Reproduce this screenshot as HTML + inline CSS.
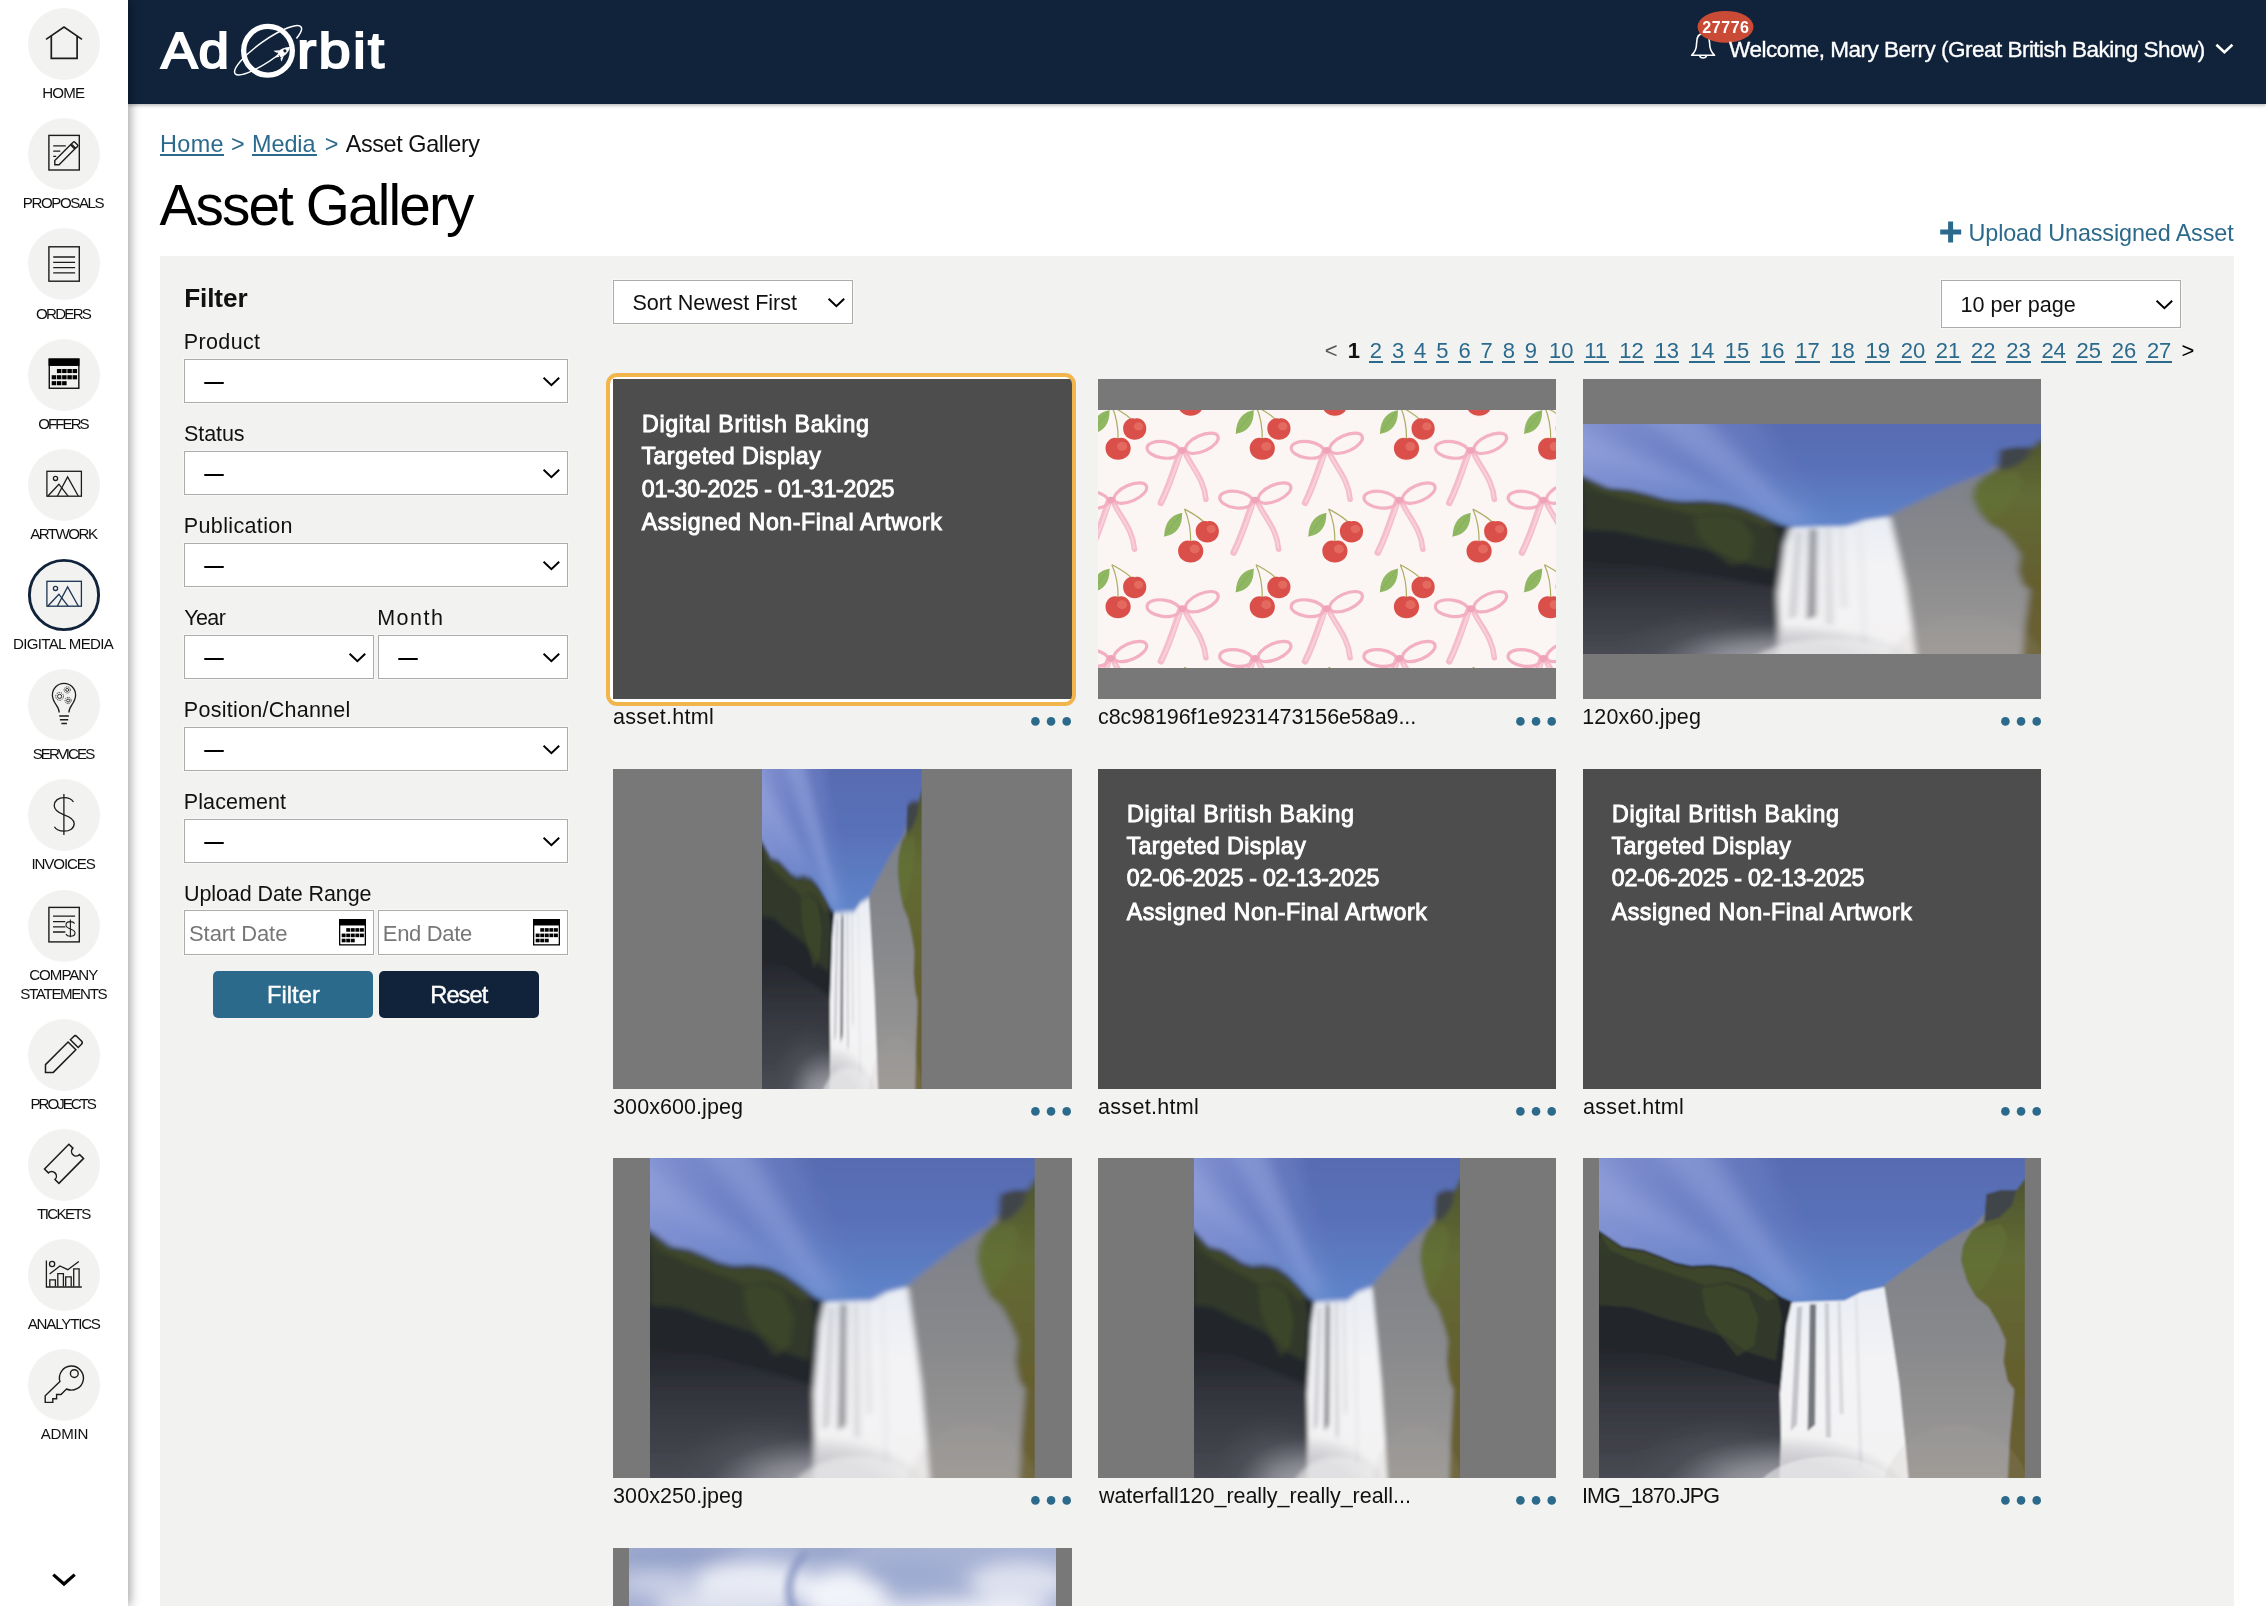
<!DOCTYPE html>
<html lang="en"><head><meta charset="utf-8"><title>Asset Gallery</title><style>
html,body{margin:0;padding:0;}
body{width:2266px;height:1606px;overflow:hidden;background:#fff;font-family:"Liberation Sans", sans-serif;position:relative;}
#root{position:absolute;left:0;top:0;width:2266px;height:1606px;overflow:hidden;will-change:transform;}
#root div,#root span.t,#root svg{position:absolute;}
span.t{white-space:pre;display:block;}
</style></head><body><div id="root">
<div style="left:160px;top:256px;width:2074px;height:1350px;background:#f2f2f1;"></div>
<div style="left:128px;top:0;width:2138px;height:104px;background:#10233b;box-shadow:0 1px 4px rgba(0,0,0,.35);"></div>
<div style="left:0;top:0;width:128px;height:1606px;background:#fff;box-shadow:2px 0 10px rgba(0,0,0,.38);"></div>
<svg width="128" height="1606" viewBox="0 0 128 1606" style="left:0;top:0"><circle cx="64" cy="44" r="36" fill="#f2f2f1"/><circle cx="64" cy="154" r="36" fill="#f2f2f1"/><circle cx="64" cy="264" r="36" fill="#f2f2f1"/><circle cx="64" cy="375" r="36" fill="#f2f2f1"/><circle cx="64" cy="485" r="36" fill="#f2f2f1"/><circle cx="64" cy="595" r="34.6" fill="#f2f2f1" stroke="#10233b" stroke-width="2.9"/><circle cx="64" cy="705" r="36" fill="#f2f2f1"/><circle cx="64" cy="815" r="36" fill="#f2f2f1"/><circle cx="64" cy="926" r="36" fill="#f2f2f1"/><circle cx="64" cy="1055" r="36" fill="#f2f2f1"/><circle cx="64" cy="1165" r="36" fill="#f2f2f1"/><circle cx="64" cy="1275" r="36" fill="#f2f2f1"/><circle cx="64" cy="1385" r="36" fill="#f2f2f1"/><g fill="none" stroke="#1c1c1c" stroke-width="1.7" stroke-linejoin="miter" stroke-linecap="butt"><path d="M46,39.4 L64,27 L82,39.4"/><path d="M51.3,36 V58.4 H77.1 V36"/></g><g fill="none" stroke="#1c1c1c" stroke-width="1.4" stroke-linejoin="miter" stroke-linecap="butt"><rect x="48.9" y="135.4" width="30.4" height="34.6"/><path d="M53.2,145.9 H65.8 M53.2,151.1 H60.3 M53.2,156.3 H56.2" stroke-width="1.2"/><g fill="#f2f2f1"><g transform="translate(54.8,164.8) rotate(-45)"><path d="M0,0 L3.0,-3.0 L25.2,-3.0 L25.2,3.0 L3.0,3.0 Z"/><path d="M26.4,-3.0 L29.0,-3.0 Q30.2,-3.0 30.2,-1.8 L30.2,1.8 Q30.2,3.0 29.0,3.0 L26.4,3.0 Z"/></g></g></g><g fill="none" stroke="#1c1c1c" stroke-width="1.4" stroke-linejoin="miter" stroke-linecap="butt"><rect x="48.9" y="246.8" width="30.4" height="34.4"/><path d="M53.2,257 H75.1 M53.2,262.3 H75.1 M53.2,267.6 H75.1 M53.2,272.8 H75.1" stroke-width="1.3"/></g><g><rect x="49.25" y="359.15" width="29.599999999999998" height="29.099999999999998" fill="none" stroke="#000" stroke-width="1.3"/><rect x="48.6" y="358.5" width="30.9" height="7.45" fill="#000"/><rect x="56.91" y="368.99" width="4.48" height="4.10" fill="#000"/><rect x="62.13" y="368.99" width="4.48" height="4.10" fill="#000"/><rect x="67.36" y="368.99" width="4.48" height="4.10" fill="#000"/><rect x="72.58" y="368.99" width="4.48" height="4.10" fill="#000"/><rect x="51.69" y="375.22" width="4.48" height="4.10" fill="#000"/><rect x="56.91" y="375.22" width="4.48" height="4.10" fill="#000"/><rect x="62.13" y="375.22" width="4.48" height="4.10" fill="#000"/><rect x="67.36" y="375.22" width="4.48" height="4.10" fill="#000"/><rect x="72.58" y="375.22" width="4.48" height="4.10" fill="#000"/><rect x="51.69" y="381.15" width="4.48" height="4.10" fill="#000"/><rect x="56.91" y="381.15" width="4.48" height="4.10" fill="#000"/><rect x="62.13" y="381.15" width="4.48" height="4.10" fill="#000"/></g><g fill="none" stroke="#1c1c1c" stroke-width="1.3" stroke-linejoin="miter" stroke-linecap="butt"><rect x="46.9" y="471.3" width="34.5" height="24.90"/><circle cx="55.5" cy="478.40" r="2.1"/><path d="M47.7,496.2 L58.9,484.20 L68.1,496.2"/><path d="M57.3,496.2 L67.6,476.90 L78.4,496.2"/></g><g fill="none" stroke="#1d3352" stroke-width="1.3" stroke-linejoin="miter" stroke-linecap="butt"><rect x="46.9" y="581.3000000000001" width="34.5" height="24.90"/><circle cx="55.5" cy="588.40" r="2.1"/><path d="M47.7,606.1999999999999 L58.9,594.20 L68.1,606.1999999999999"/><path d="M57.3,606.1999999999999 L67.6,586.90 L78.4,606.1999999999999"/></g><g fill="none" stroke="#1c1c1c" stroke-width="1.3" stroke-linejoin="miter" stroke-linecap="butt"><path d="M59.2,712.6 C59.2,705.5 52.4,703.5 52.4,695 A11.6,11.6 0 1 1 75.6,695 C75.6,703.5 68.9,705.5 68.9,712.6"/><path d="M59.2,716 H68.9 M59.9,719.8 H68.2 M61.4,723.5 H66.9" stroke-width="1.5"/><g stroke-width="0.9"><circle cx="59.6" cy="696.4" r="2.1"/><circle cx="59.6" cy="696.4" r="3.9" stroke-dasharray="1.3 1.1"/><circle cx="67.2" cy="689.9" r="1.5"/><circle cx="67.2" cy="689.9" r="3.1" stroke-dasharray="1.2 1"/><circle cx="68.1" cy="700.5" r="1.5"/><circle cx="68.1" cy="700.5" r="3.1" stroke-dasharray="1.2 1"/></g></g><g fill="none" stroke="#1c1c1c" stroke-width="1.3" stroke-linejoin="miter" stroke-linecap="butt"><path d="M63.9,793.9 V835"/><path d="M73.4,802 C71.8,799 68.3,797.6 64,797.6 C58.2,797.6 54.2,801 54.2,805.6 C54.2,810.6 58.5,812.9 64,814.8 C70,816.8 74.2,819 74.2,823.6 C74.2,828.4 69.8,831.2 64,831.2 C59.5,831.2 56,829.6 54.4,826.8"/></g><g fill="none" stroke="#1c1c1c" stroke-width="1.4" stroke-linejoin="miter" stroke-linecap="butt"><rect x="48.9" y="907.4" width="30.4" height="34.5"/><path d="M53,916.1 H75.1 M53,921.6 H65.3 M53,926.8 H65.3 M53,932 H65.3" stroke-width="1.3"/><path d="M70.4,919.4 V937.3" stroke-width="1.1"/><path d="M74.6,923.6 C73.8,922.2 72.3,921.6 70.4,921.6 C67.8,921.6 66,923 66,925 C66,927.2 68,928.2 70.4,928.9 C73.2,929.8 75,930.8 75,932.9 C75,935 73,936.2 70.4,936.2 C68.2,936.2 66.6,935.4 65.9,934" stroke-width="1.1"/></g><g fill="none" stroke="#1c1c1c" stroke-width="1.5" stroke-linejoin="miter" stroke-linecap="butt"><g transform="translate(45.5,1072.4) rotate(-45)"><path d="M0,0 L5.5,-5.5 L37.4,-5.5 L37.4,5.5 L5.5,5.5 Z"/><path d="M40.7,-5.5 L45.4,-5.5 Q47.6,-5.5 47.6,-3.3 L47.6,3.3 Q47.6,5.5 45.4,5.5 L40.7,5.5 Z"/></g></g><g fill="none" stroke="#1c1c1c" stroke-width="1.5" stroke-linejoin="miter" stroke-linecap="butt"><path d="M68.9,1144.3 L72.87,1148.11 A4.68,4.68 0 0 0 79.63,1154.59 L83.6,1158.4 L58.9,1183.4 L55.01,1179.51 A4.68,4.68 0 0 0 48.39,1172.89 L44.5,1169 Z"/></g><g fill="none" stroke="#1c1c1c" stroke-width="1.3" stroke-linejoin="miter" stroke-linecap="butt"><path d="M46.4,1260.4 V1287 H81.8"/><path d="M49.8,1286.6 V1279.8 H55.4 V1286.6 M57.8,1286.6 V1273.7 H63.4 V1286.6 M65.7,1286.6 V1276.8 H71.2 V1286.6 M73.7,1286.6 V1268.8 H79.1 V1286.6"/><path d="M49.6,1274.1 L59.9,1265.9 L67.8,1269.7 L78.8,1261.5"/><circle cx="52.1" cy="1264" r="2.6"/></g><g fill="none" stroke="#1c1c1c" stroke-width="1.4" stroke-linejoin="miter" stroke-linecap="butt"><path d="M59.9,1381.4 L45.2,1395.8 V1402.4 H52.8 V1398.8 H56.6 V1394.5 H61 L66.5,1389 A12,12 0 1 0 59.9,1381.4 Z"/><circle cx="74.3" cy="1373.6" r="3.9"/></g><path d="M53.3,1574.6 L64,1584 L74.7,1574.6" fill="none" stroke="#000" stroke-width="3.2"/></svg>
<span class="t" style="left:42.21px;top:84.00px;font-size:15.1px;line-height:17px;color:#111;letter-spacing:-0.765px;">HOME</span>
<span class="t" style="left:22.86px;top:194.00px;font-size:15.1px;line-height:17px;color:#111;letter-spacing:-1.424px;">PROPOSALS</span>
<span class="t" style="left:36.08px;top:305.00px;font-size:15.1px;line-height:17px;color:#111;letter-spacing:-1.754px;">ORDERS</span>
<span class="t" style="left:38.28px;top:415.00px;font-size:15.1px;line-height:17px;color:#111;letter-spacing:-1.962px;">OFFERS</span>
<span class="t" style="left:30.17px;top:525.00px;font-size:15.1px;line-height:17px;color:#111;letter-spacing:-1.513px;">ARTWORK</span>
<span class="t" style="left:12.96px;top:635.00px;font-size:15.1px;line-height:17px;color:#111;letter-spacing:-0.68px;">DIGITAL MEDIA</span>
<span class="t" style="left:32.66px;top:745.00px;font-size:15.1px;line-height:17px;color:#111;letter-spacing:-1.912px;">SERVICES</span>
<span class="t" style="left:31.51px;top:855.00px;font-size:15.1px;line-height:17px;color:#111;letter-spacing:-1.122px;">INVOICES</span>
<span class="t" style="left:29.23px;top:966.00px;font-size:15.1px;line-height:17px;color:#111;letter-spacing:-1.017px;">COMPANY</span>
<span class="t" style="left:20.36px;top:985.00px;font-size:15.1px;line-height:17px;color:#111;letter-spacing:-1.328px;">STATEMENTS</span>
<span class="t" style="left:30.56px;top:1095.00px;font-size:15.1px;line-height:17px;color:#111;letter-spacing:-2.026px;">PROJECTS</span>
<span class="t" style="left:37.11px;top:1205.00px;font-size:15.1px;line-height:17px;color:#111;letter-spacing:-1.603px;">TICKETS</span>
<span class="t" style="left:27.72px;top:1315.00px;font-size:15.1px;line-height:17px;color:#111;letter-spacing:-1.193px;">ANALYTICS</span>
<span class="t" style="left:40.82px;top:1425.00px;font-size:15.1px;line-height:17px;color:#111;letter-spacing:-0.27px;">ADMIN</span>
<svg width="2138" height="104" viewBox="128 0 2138 104" style="left:128px;top:0"><circle cx="268" cy="50.75" r="24.35" fill="none" stroke="#fff" stroke-width="5.3"/><g transform="translate(268.1,50.3) rotate(-35.3)" fill="none" stroke="#fff" stroke-width="1.5"><path d="M13,9.2 A40.4,10 0 0 1 -40.4,0 A40.4,10 0 0 1 40.4,0 A40.4,10 0 0 1 30,6.7"/></g><g transform="translate(282.2,52.8) rotate(54) scale(1.28)" fill="#fff"><path d="M0,-7.5 C2.6,-4.5 3,-1 2.6,3 L-2.6,3 C-3,-1 -2.6,-4.5 0,-7.5 Z"/><path d="M-2.8,0.5 L-5.4,4.6 L-2.6,3.6 Z M2.8,0.5 L5.4,4.6 L2.6,3.6 Z M-1.3,3.6 L0,6.2 L1.3,3.6 Z"/><circle cx="0" cy="-2.6" r="1.25" fill="#10233b"/></g><g fill="none" stroke="#fff" stroke-width="1.6" stroke-linejoin="round"><path d="M1691.6,55.3 C1696,51.5 1696.6,47.5 1696.6,43 C1696.6,37 1699,33.6 1703.1,33.6 C1707.2,33.6 1709.6,37 1709.6,43 C1709.6,47.5 1710.2,51.5 1714.6,55.3 Z"/><path d="M1699.6,55.6 A3.6,3.1 0 0 0 1706.6,55.6"/></g><ellipse cx="1725.5" cy="26.8" rx="28" ry="15.9" fill="#c94b35"/><path d="M2216.4,44.8 L2224.4,52.2 L2232.4,44.8" fill="none" stroke="#fff" stroke-width="2.6"/></svg>
<span class="t" style="left:160.89px;top:22.00px;font-size:50.8px;line-height:57px;color:#fff;letter-spacing:0.862px;transform:scaleX(1.08);transform-origin:0 0;-webkit-text-stroke:1.9px #fff;">Ad</span>
<span class="t" style="left:296.55px;top:22.00px;font-size:50.8px;line-height:57px;color:#fff;letter-spacing:1.933px;transform:scaleX(1.14);transform-origin:0 0;-webkit-text-stroke:1.9px #fff;">rbit</span>
<span class="t" style="left:1702.35px;top:19.00px;font-size:16px;line-height:17px;color:#fff;letter-spacing:0.533px;font-weight:700;">27776</span>
<span class="t" style="left:1729.10px;top:37.00px;font-size:22.5px;line-height:25px;color:#fff;letter-spacing:-0.512px;-webkit-text-stroke:0.35px #fff;">Welcome, Mary Berry (Great British Baking Show)</span>
<span class="t" style="left:160.08px;top:131.00px;font-size:23.4px;line-height:26px;color:#2b6a8c;letter-spacing:0.384px;">Home</span><div style="left:160.10px;top:154.1px;width:63.50px;height:1.9px;background:#2b6a8c"></div>
<span class="t" style="left:231.05px;top:131.00px;font-size:23.4px;line-height:26px;color:#2b6a8c;letter-spacing:-0.375px;">&gt;</span>
<span class="t" style="left:252.08px;top:131.00px;font-size:23.4px;line-height:26px;color:#2b6a8c;letter-spacing:-0.075px;">Media</span><div style="left:252.30px;top:154.1px;width:64.60px;height:1.9px;background:#2b6a8c"></div>
<span class="t" style="left:324.65px;top:131.00px;font-size:23.4px;line-height:26px;color:#2b6a8c;letter-spacing:-0.175px;">&gt;</span>
<span class="t" style="left:345.75px;top:131.00px;font-size:23.4px;line-height:26px;color:#111;letter-spacing:-0.4px;">Asset Gallery</span>
<span class="t" style="left:159.49px;top:174.00px;font-size:56.7px;line-height:63px;color:#000;letter-spacing:-1.856px;">Asset Gallery</span>
<svg width="22" height="22" viewBox="0 0 22 22" style="left:1940px;top:221px"><path d="M10.6,0.4 V21.4 M0.2,10.9 H21.2" stroke="#2b6a8c" stroke-width="5" fill="none"/></svg>
<span class="t" style="left:1968.49px;top:220.00px;font-size:23.4px;line-height:26px;color:#2b6a8c;letter-spacing:-0.123px;">Upload Unassigned Asset</span>
<span class="t" style="left:184.15px;top:283.00px;font-size:26.2px;line-height:30px;color:#111;letter-spacing:-0.116px;font-weight:700;">Filter</span>
<span class="t" style="left:183.84px;top:330.00px;font-size:21.5px;line-height:24px;color:#111;letter-spacing:0.352px;">Product</span>
<div style="left:184px;top:359px;width:382px;height:42px;background:#fff;border:1px solid #acacac;box-shadow:0 0 0 1px rgba(255,255,255,.45);"></div>
<div style="left:204.2px;top:382.3px;width:19.6px;height:1.8px;background:#000;border-radius:1px"></div>
<svg width="20.8" height="13.2" viewBox="-2 -2 20.8 13.2" style="left:541.4px;top:374.6px"><path d="M0.6,0.7 L8.40,8.20 L16.20,0.7" fill="none" stroke="#000" stroke-width="2"/></svg>
<span class="t" style="left:184.02px;top:422.00px;font-size:21.5px;line-height:24px;color:#111;letter-spacing:-0.08px;">Status</span>
<div style="left:184px;top:451px;width:382px;height:42px;background:#fff;border:1px solid #acacac;box-shadow:0 0 0 1px rgba(255,255,255,.45);"></div>
<div style="left:204.2px;top:474.3px;width:19.6px;height:1.8px;background:#000;border-radius:1px"></div>
<svg width="20.8" height="13.2" viewBox="-2 -2 20.8 13.2" style="left:541.4px;top:466.6px"><path d="M0.6,0.7 L8.40,8.20 L16.20,0.7" fill="none" stroke="#000" stroke-width="2"/></svg>
<span class="t" style="left:183.84px;top:514.00px;font-size:21.5px;line-height:24px;color:#111;letter-spacing:0.357px;">Publication</span>
<div style="left:184px;top:543px;width:382px;height:42px;background:#fff;border:1px solid #acacac;box-shadow:0 0 0 1px rgba(255,255,255,.45);"></div>
<div style="left:204.2px;top:566.3px;width:19.6px;height:1.8px;background:#000;border-radius:1px"></div>
<svg width="20.8" height="13.2" viewBox="-2 -2 20.8 13.2" style="left:541.4px;top:558.6px"><path d="M0.6,0.7 L8.40,8.20 L16.20,0.7" fill="none" stroke="#000" stroke-width="2"/></svg>
<span class="t" style="left:183.84px;top:698.00px;font-size:21.5px;line-height:24px;color:#111;letter-spacing:0.263px;">Position/Channel</span>
<div style="left:184px;top:727px;width:382px;height:42px;background:#fff;border:1px solid #acacac;box-shadow:0 0 0 1px rgba(255,255,255,.45);"></div>
<div style="left:204.2px;top:750.3px;width:19.6px;height:1.8px;background:#000;border-radius:1px"></div>
<svg width="20.8" height="13.2" viewBox="-2 -2 20.8 13.2" style="left:541.4px;top:742.6px"><path d="M0.6,0.7 L8.40,8.20 L16.20,0.7" fill="none" stroke="#000" stroke-width="2"/></svg>
<span class="t" style="left:183.84px;top:790.00px;font-size:21.5px;line-height:24px;color:#111;letter-spacing:0.078px;">Placement</span>
<div style="left:184px;top:819px;width:382px;height:42px;background:#fff;border:1px solid #acacac;box-shadow:0 0 0 1px rgba(255,255,255,.45);"></div>
<div style="left:204.2px;top:842.3px;width:19.6px;height:1.8px;background:#000;border-radius:1px"></div>
<svg width="20.8" height="13.2" viewBox="-2 -2 20.8 13.2" style="left:541.4px;top:834.6px"><path d="M0.6,0.7 L8.40,8.20 L16.20,0.7" fill="none" stroke="#000" stroke-width="2"/></svg>
<span class="t" style="left:184.13px;top:606.00px;font-size:21.5px;line-height:24px;color:#111;letter-spacing:-0.541px;">Year</span>
<span class="t" style="left:377.24px;top:606.00px;font-size:21.5px;line-height:24px;color:#111;letter-spacing:1.474px;">Month</span>
<div style="left:184px;top:635px;width:188px;height:42px;background:#fff;border:1px solid #acacac;box-shadow:0 0 0 1px rgba(255,255,255,.45);"></div>
<div style="left:204.2px;top:658.3px;width:19.6px;height:1.8px;background:#000;border-radius:1px"></div>
<svg width="20.8" height="13.2" viewBox="-2 -2 20.8 13.2" style="left:347.4px;top:650.6px"><path d="M0.6,0.7 L8.40,8.20 L16.20,0.7" fill="none" stroke="#000" stroke-width="2"/></svg>
<div style="left:378px;top:635px;width:188px;height:42px;background:#fff;border:1px solid #acacac;box-shadow:0 0 0 1px rgba(255,255,255,.45);"></div>
<div style="left:398.2px;top:658.3px;width:19.6px;height:1.8px;background:#000;border-radius:1px"></div>
<svg width="20.8" height="13.2" viewBox="-2 -2 20.8 13.2" style="left:541.4px;top:650.6px"><path d="M0.6,0.7 L8.40,8.20 L16.20,0.7" fill="none" stroke="#000" stroke-width="2"/></svg>
<span class="t" style="left:183.94px;top:882.00px;font-size:21.5px;line-height:24px;color:#111;letter-spacing:-0.078px;">Upload Date Range</span>
<div style="left:184px;top:910px;width:188px;height:42.7px;background:#fff;border:1px solid #acacac;box-shadow:0 0 0 1px rgba(255,255,255,.45);"></div>
<span class="t" style="left:189.00px;top:921.00px;font-size:22px;line-height:25px;color:#777;letter-spacing:-0.074px;">Start Date</span>
<svg width="27" height="27" viewBox="0 0 27 27" style="left:339px;top:919.3px"><g><rect x="0.65" y="0.65" width="25.7" height="25.2" fill="none" stroke="#000" stroke-width="1.3"/><rect x="0" y="0" width="27" height="6.49" fill="#000"/><rect x="7.26" y="9.14" width="3.91" height="3.58" fill="#000"/><rect x="11.83" y="9.14" width="3.91" height="3.58" fill="#000"/><rect x="16.39" y="9.14" width="3.91" height="3.58" fill="#000"/><rect x="20.95" y="9.14" width="3.91" height="3.58" fill="#000"/><rect x="2.70" y="14.58" width="3.91" height="3.58" fill="#000"/><rect x="7.26" y="14.58" width="3.91" height="3.58" fill="#000"/><rect x="11.83" y="14.58" width="3.91" height="3.58" fill="#000"/><rect x="16.39" y="14.58" width="3.91" height="3.58" fill="#000"/><rect x="20.95" y="14.58" width="3.91" height="3.58" fill="#000"/><rect x="2.70" y="19.74" width="3.91" height="3.58" fill="#000"/><rect x="7.26" y="19.74" width="3.91" height="3.58" fill="#000"/><rect x="11.83" y="19.74" width="3.91" height="3.58" fill="#000"/></g></svg>
<div style="left:378px;top:910px;width:188px;height:42.7px;background:#fff;border:1px solid #acacac;box-shadow:0 0 0 1px rgba(255,255,255,.45);"></div>
<span class="t" style="left:382.80px;top:921.00px;font-size:22px;line-height:25px;color:#777;letter-spacing:-0.336px;">End Date</span>
<svg width="27" height="27" viewBox="0 0 27 27" style="left:533px;top:919.3px"><g><rect x="0.65" y="0.65" width="25.7" height="25.2" fill="none" stroke="#000" stroke-width="1.3"/><rect x="0" y="0" width="27" height="6.49" fill="#000"/><rect x="7.26" y="9.14" width="3.91" height="3.58" fill="#000"/><rect x="11.83" y="9.14" width="3.91" height="3.58" fill="#000"/><rect x="16.39" y="9.14" width="3.91" height="3.58" fill="#000"/><rect x="20.95" y="9.14" width="3.91" height="3.58" fill="#000"/><rect x="2.70" y="14.58" width="3.91" height="3.58" fill="#000"/><rect x="7.26" y="14.58" width="3.91" height="3.58" fill="#000"/><rect x="11.83" y="14.58" width="3.91" height="3.58" fill="#000"/><rect x="16.39" y="14.58" width="3.91" height="3.58" fill="#000"/><rect x="20.95" y="14.58" width="3.91" height="3.58" fill="#000"/><rect x="2.70" y="19.74" width="3.91" height="3.58" fill="#000"/><rect x="7.26" y="19.74" width="3.91" height="3.58" fill="#000"/><rect x="11.83" y="19.74" width="3.91" height="3.58" fill="#000"/></g></svg>
<div style="left:213px;top:971px;width:160px;height:47px;background:#2c6a8b;border-radius:5px;"></div>
<div style="left:379px;top:971px;width:160px;height:47px;background:#10233b;border-radius:5px;"></div>
<span class="t" style="left:266.96px;top:982.00px;font-size:23.6px;line-height:26px;color:#fff;letter-spacing:0.078px;-webkit-text-stroke:0.4px #fff;">Filter</span>
<span class="t" style="left:430.26px;top:982.00px;font-size:23.6px;line-height:26px;color:#fff;letter-spacing:-0.908px;-webkit-text-stroke:0.4px #fff;">Reset</span>
<svg width="0" height="0" style="left:0;top:0"><defs>
<linearGradient id="gsky" x1="0" y1="0" x2="0" y2="1">
 <stop offset="0" stop-color="#5868ad"/><stop offset=".25" stop-color="#5970b8"/><stop offset=".47" stop-color="#5f86cb"/><stop offset="1" stop-color="#5f86cb"/>
</linearGradient>
<linearGradient id="gskyl" x1="0" y1="0" x2="1" y2="0">
 <stop offset="0" stop-color="#93a0dc" stop-opacity=".9"/><stop offset=".2" stop-color="#8696d6" stop-opacity=".6"/><stop offset=".45" stop-color="#7c8fd0" stop-opacity="0"/>
</linearGradient>
<linearGradient id="gcliff" x1="0" y1="0" x2="0" y2="1">
 <stop offset="0" stop-color="#343a2c"/><stop offset=".2" stop-color="#24282a"/><stop offset=".55" stop-color="#24262b"/><stop offset="1" stop-color="#2f3037"/>
</linearGradient>
<linearGradient id="gmist" x1="0" y1="0" x2="0" y2="1">
 <stop offset="0" stop-color="#7b7e88"/><stop offset=".45" stop-color="#88898c"/><stop offset="1" stop-color="#a29e9a"/>
</linearGradient>
<linearGradient id="ggreen" x1="0" y1="0" x2="0" y2="1">
 <stop offset="0" stop-color="#4b5130"/><stop offset=".25" stop-color="#626b34"/><stop offset=".6" stop-color="#655f2f"/><stop offset="1" stop-color="#6a6036"/>
</linearGradient>
<linearGradient id="gfall" x1="0" y1="0" x2="0" y2="1">
 <stop offset="0" stop-color="#e9edf4"/><stop offset=".3" stop-color="#f3f3f5"/><stop offset="1" stop-color="#f4f2f2"/>
</linearGradient>
<radialGradient id="gspray" cx=".5" cy=".5" r=".5">
 <stop offset="0" stop-color="#d5d5da" stop-opacity=".95"/><stop offset=".6" stop-color="#a9aab2" stop-opacity=".55"/><stop offset="1" stop-color="#80828c" stop-opacity="0"/>
</radialGradient>
<linearGradient id="ghaze" x1="0" y1="0" x2="0" y2="1">
 <stop offset="0" stop-color="#4a4c56" stop-opacity="0"/><stop offset=".35" stop-color="#4a4c56" stop-opacity=".45"/><stop offset="1" stop-color="#62646e" stop-opacity=".75"/>
</linearGradient>
<radialGradient id="gspray2" cx=".5" cy=".5" r=".5">
 <stop offset="0" stop-color="#74767f" stop-opacity=".7"/><stop offset="1" stop-color="#5a5c66" stop-opacity="0"/>
</radialGradient>
<filter id="fbA" x="-5%" y="-5%" width="110%" height="110%"><feGaussianBlur stdDeviation="3.2 2.6"/></filter>
<filter id="fbB" x="-5%" y="-5%" width="110%" height="110%"><feGaussianBlur stdDeviation="1.1"/></filter>
<filter id="fbS" x="-10%" y="-10%" width="120%" height="120%"><feGaussianBlur stdDeviation="9"/></filter>
<filter id="fbC" x="-20%" y="-20%" width="140%" height="140%"><feGaussianBlur stdDeviation="9"/></filter>
<filter id="fbE" x="-50%" y="-20%" width="200%" height="140%"><feGaussianBlur stdDeviation="3.5"/></filter>
<filter id="fbD" x="-20%" y="-20%" width="140%" height="140%"><feGaussianBlur stdDeviation="0.7"/></filter>

<g id="wfshapes">
 <rect x="-40" y="-40" width="480" height="380" fill="url(#gsky)"/>
 <rect x="-40" y="-40" width="480" height="220" fill="url(#gskyl)"/>
 <g filter="url(#fbS)">
  <path d="M25,-40 L85,-40 L200,134 L172,128 Z" fill="#a3b0e8" opacity=".42"/>
  <path d="M-40,-20 L-40,30 L150,112 L168,122 Z" fill="#a9b5ea" opacity=".3"/>
  <path d="M110,-40 L128,-40 L215,132 L206,134 Z" fill="#8fa0de" opacity=".18"/>
 </g>
 <path d="M262,124 L280,110 L300,96 L320,82 L340,70 L352,64 L364,50 L440,30 L440,340 L288,340 L284,240 L276,171 Z" fill="url(#gmist)"/>
 <path d="M400,20 L440,10 L440,340 L382,340 L386,261 L388,241 L390,217 L384,209 L380,191 L382,171 L376,157 L366,140 L354,130 L346,116 L340,96 L342,82 L350,68 L362,60 L364,34 L378,30 L392,30 Z" fill="url(#ggreen)"/>
 <path d="M364,34 L378,30 L392,30 L388,44 L376,56 L362,60 Z" fill="#3f444a"/>
 <path d="M378,62 L350,68 L342,82 L340,96 L346,116 L356,126 L368,112 L378,92 L384,74 Z" fill="#66763a" opacity=".45"/>
 <path d="M-40,48 L0,68 L22,83 L42,86 L58,92 L72,98 L87,101 L105,100 L125,103 L141,110 L157,120 L171,130 L182,135 L177,157 L174,191 L171,221 L172,261 L172,340 L-40,340 Z" fill="url(#gcliff)"/>
 <path d="M0,70 L22,85 L42,88 L58,94 L72,100 L87,103 L105,102 L125,105 L141,112 L157,122 L168,131 L158,134 L140,122 L120,116 L100,120 L84,114 L60,106 L36,98 L10,86 Z" fill="#4a522d" opacity=".7"/>
 <path d="M0,74 L40,92 L70,102 L105,104 L140,114 L168,132 L172,150 L166,190 L140,182 L120,168 L96,160 L60,150 L30,140 L0,138 Z" fill="#3d452a" opacity=".55"/>
 <path d="M96,122 L120,118 L140,126 L150,150 L146,176 L130,186 L114,166 L100,146 Z" fill="#4a552e" opacity=".45"/>
 <path d="M-40,175 L60,185 L120,200 L175,215 L172,340 L-40,340 Z" fill="url(#ghaze)"/>
 <ellipse cx="120" cy="290" rx="90" ry="50" fill="url(#gspray2)" opacity=".7"/>
 <path d="M181,135.5 L201,134.5 L231,133.5 L246.5,125.6 L268,121 L276,171 L282,211 L288,270 L294,340 L168,340 L171,261 L170,221 L173,191 L176,157 Z" fill="url(#gfall)"/>
 <path d="M198,137 L204,137 L203,250 L196,256 Z" fill="#565961" opacity=".8"/>
 <path d="M186,140 L191,139 L186,250 L180,256 Z" fill="#aeb0b8" opacity=".7"/>
 <path d="M212,136 L216,136 L218,262 L213,262 Z" fill="#b4b6bd" opacity=".6"/>
 <path d="M224,135 L227,135 L230,240 L226,240 Z" fill="#c8c9cf" opacity=".6"/>
 <path d="M240,130 L243,129 L248,290 L244,290 Z" fill="#dfe0e4" opacity=".7"/>
 <ellipse cx="175" cy="322" rx="120" ry="62" fill="url(#gspray)"/>
 <ellipse cx="215" cy="320" rx="70" ry="40" fill="#f2f2f3" opacity=".55"/>
 <ellipse cx="335" cy="320" rx="70" ry="70" fill="#b3a9a0" opacity=".14"/>
</g><symbol id="wf" viewBox="0 0 400 300" preserveAspectRatio="none"><use href="#wfshapes" filter="url(#fbA)"/></symbol><symbol id="wfsharp" viewBox="0 0 400 300" preserveAspectRatio="none"><use href="#wfshapes" filter="url(#fbB)"/></symbol>
<symbol id="sky" viewBox="0 0 427 320" preserveAspectRatio="none">
 <rect width="427" height="320" fill="#a7b2d4"/>
 <g filter="url(#fbC)">
  <ellipse cx="125" cy="34" rx="60" ry="20" fill="#e9ecf5"/>
  <ellipse cx="95" cy="58" rx="70" ry="14" fill="#dfe2ef"/>
  <ellipse cx="30" cy="36" rx="40" ry="9" fill="#cfd4e8"/>
  <ellipse cx="215" cy="48" rx="42" ry="26" fill="#f2f4fa"/>
  <ellipse cx="250" cy="64" rx="60" ry="10" fill="#eef0f8"/>
  <ellipse cx="390" cy="34" rx="50" ry="20" fill="#dde1ef"/>
  <ellipse cx="345" cy="64" rx="80" ry="12" fill="#f0f2f9"/>
  <ellipse cx="45" cy="6" rx="70" ry="10" fill="#929fc8"/>
  <ellipse cx="280" cy="26" rx="48" ry="14" fill="#9eabd1"/>
  <ellipse cx="200" cy="2" rx="30" ry="6" fill="#8f9cc7"/>
 </g>
 <g filter="url(#fbE)"><path d="M178,4 C160,20 155,44 166,64" fill="none" stroke="#8895c2" stroke-width="7"/></g>
</symbol>
<g id="chy">
 <path d="M-6.2,-42.5 C-2,-33 0.2,-22 0,-9" fill="none" stroke="#a9ad62" stroke-width="1.2"/>
 <path d="M-6.2,-42.5 C2,-38 10,-34 15.5,-27" fill="none" stroke="#a9ad62" stroke-width="1.2"/>
 <path d="M-8.6,-38.5 C-18,-37.5 -26.5,-30 -26.5,-15 C-14,-17 -8.2,-25 -8.6,-38.5 Z" fill="#90b862"/>
 <path d="M-8.6,-38.5 C-14,-32 -20,-24 -26.5,-15" fill="none" stroke="#7fa653" stroke-width=".6"/>
 <path d="M16.6,-30 C22,-32 28.4,-27 28.2,-20 C28,-13 22.5,-9 16.6,-9 C10.7,-9 5.2,-13 5,-20 C4.8,-27 11.2,-32 16.6,-30 Z" fill="#da5048"/>
 <ellipse cx="20.5" cy="-22.5" rx="4.6" ry="4" fill="#ea7a6e" opacity=".65"/>
 <path d="M0,-10.5 C6,-12.8 12.8,-7.5 12.6,-0.2 C12.4,7 6.5,11 0,11 C-6.5,11 -12.4,7 -12.6,-0.2 C-12.8,-7.5 -6,-12.8 0,-10.5 Z" fill="#da5048"/>
 <ellipse cx="4" cy="-2.5" rx="5" ry="4.4" fill="#ea7a6e" opacity=".65"/>
</g>
<g id="bow" fill="none" stroke-linecap="round">
 <path d="M-2.5,3 C-7,16 -13,36 -21.5,53" stroke="#f5bccb" stroke-width="6.6"/>
 <path d="M-2.2,5 C-6.5,17 -12.5,36 -20.8,52" stroke="#f8cfda" stroke-width="2.4"/>
 <path d="M3.5,4.5 C10,18 22,30 23.5,49.5" stroke="#f5bccb" stroke-width="5.6"/>
 <path d="M4.2,6.5 C10.5,19 21.5,31 23.2,48" stroke="#f8cfda" stroke-width="2"/>
 <ellipse cx="-19" cy="0" rx="16.5" ry="8.2" transform="rotate(8 -19 0)" stroke="#f3b0c3" stroke-width="3.2"/>
 <ellipse cx="19.5" cy="-6.5" rx="17.5" ry="8" transform="rotate(-24 19.5 -6.5)" stroke="#f3b0c3" stroke-width="3.2"/>
 <ellipse cx="0" cy="0.5" rx="3.8" ry="3.4" fill="#f0a2b8" stroke="none"/>
</g></defs></svg>
<div style="left:613px;top:280px;width:238px;height:42px;background:#fff;border:1px solid #acacac;box-shadow:0 0 0 1px rgba(255,255,255,.45);"></div>
<svg width="20.8" height="13.2" viewBox="-2 -2 20.8 13.2" style="left:826.4px;top:295.6px"><path d="M0.6,0.7 L8.40,8.20 L16.20,0.7" fill="none" stroke="#000" stroke-width="2"/></svg>
<span class="t" style="left:632.42px;top:290.00px;font-size:21.6px;line-height:25px;color:#111;letter-spacing:-0.066px;">Sort Newest First</span>
<div style="left:1941px;top:280px;width:238px;height:45.5px;background:#fff;border:1px solid #acacac;box-shadow:0 0 0 1px rgba(255,255,255,.45);"></div>
<svg width="20.8" height="13.2" viewBox="-2 -2 20.8 13.2" style="left:2154.4px;top:298.0px"><path d="M0.6,0.7 L8.40,8.20 L16.20,0.7" fill="none" stroke="#000" stroke-width="2"/></svg>
<span class="t" style="left:1960.55px;top:292.00px;font-size:21.6px;line-height:25px;color:#111;letter-spacing:-0.006px;">10 per page</span>
<span class="t" style="left:1324.82px;top:338.00px;font-size:22px;line-height:25px;color:#555;letter-spacing:0.9px;">&lt;</span>
<span class="t" style="left:1347.81px;top:338.00px;font-size:22px;line-height:25px;color:#111;letter-spacing:-1.752px;font-weight:700;">1</span>
<span class="t" style="left:1369.80px;top:338.00px;font-size:22px;line-height:25px;color:#2b6a8c;letter-spacing:0px;">2</span><div style="left:1369.30px;top:361.2px;width:13.23px;height:1.7px;background:#2b6a8c"></div>
<span class="t" style="left:1391.95px;top:338.00px;font-size:22px;line-height:25px;color:#2b6a8c;letter-spacing:0px;">3</span><div style="left:1391.45px;top:361.2px;width:13.23px;height:1.7px;background:#2b6a8c"></div>
<span class="t" style="left:1414.10px;top:338.00px;font-size:22px;line-height:25px;color:#2b6a8c;letter-spacing:0px;">4</span><div style="left:1413.60px;top:361.2px;width:13.23px;height:1.7px;background:#2b6a8c"></div>
<span class="t" style="left:1436.25px;top:338.00px;font-size:22px;line-height:25px;color:#2b6a8c;letter-spacing:0px;">5</span><div style="left:1435.75px;top:361.2px;width:13.23px;height:1.7px;background:#2b6a8c"></div>
<span class="t" style="left:1458.40px;top:338.00px;font-size:22px;line-height:25px;color:#2b6a8c;letter-spacing:0px;">6</span><div style="left:1457.90px;top:361.2px;width:13.23px;height:1.7px;background:#2b6a8c"></div>
<span class="t" style="left:1480.55px;top:338.00px;font-size:22px;line-height:25px;color:#2b6a8c;letter-spacing:0px;">7</span><div style="left:1480.05px;top:361.2px;width:13.23px;height:1.7px;background:#2b6a8c"></div>
<span class="t" style="left:1502.70px;top:338.00px;font-size:22px;line-height:25px;color:#2b6a8c;letter-spacing:0px;">8</span><div style="left:1502.20px;top:361.2px;width:13.23px;height:1.7px;background:#2b6a8c"></div>
<span class="t" style="left:1524.85px;top:338.00px;font-size:22px;line-height:25px;color:#2b6a8c;letter-spacing:0px;">9</span><div style="left:1524.35px;top:361.2px;width:13.23px;height:1.7px;background:#2b6a8c"></div>
<span class="t" style="left:1549.00px;top:338.00px;font-size:22px;line-height:25px;color:#2b6a8c;letter-spacing:0px;">10</span><div style="left:1548.50px;top:361.2px;width:25.46px;height:1.7px;background:#2b6a8c"></div>
<span class="t" style="left:1584.17px;top:338.00px;font-size:22px;line-height:25px;color:#2b6a8c;letter-spacing:0px;">11</span><div style="left:1583.67px;top:361.2px;width:25.46px;height:1.7px;background:#2b6a8c"></div>
<span class="t" style="left:1619.34px;top:338.00px;font-size:22px;line-height:25px;color:#2b6a8c;letter-spacing:0px;">12</span><div style="left:1618.84px;top:361.2px;width:25.46px;height:1.7px;background:#2b6a8c"></div>
<span class="t" style="left:1654.51px;top:338.00px;font-size:22px;line-height:25px;color:#2b6a8c;letter-spacing:0px;">13</span><div style="left:1654.01px;top:361.2px;width:25.46px;height:1.7px;background:#2b6a8c"></div>
<span class="t" style="left:1689.68px;top:338.00px;font-size:22px;line-height:25px;color:#2b6a8c;letter-spacing:0px;">14</span><div style="left:1689.18px;top:361.2px;width:25.46px;height:1.7px;background:#2b6a8c"></div>
<span class="t" style="left:1724.85px;top:338.00px;font-size:22px;line-height:25px;color:#2b6a8c;letter-spacing:0px;">15</span><div style="left:1724.35px;top:361.2px;width:25.46px;height:1.7px;background:#2b6a8c"></div>
<span class="t" style="left:1760.02px;top:338.00px;font-size:22px;line-height:25px;color:#2b6a8c;letter-spacing:0px;">16</span><div style="left:1759.52px;top:361.2px;width:25.46px;height:1.7px;background:#2b6a8c"></div>
<span class="t" style="left:1795.19px;top:338.00px;font-size:22px;line-height:25px;color:#2b6a8c;letter-spacing:0px;">17</span><div style="left:1794.69px;top:361.2px;width:25.46px;height:1.7px;background:#2b6a8c"></div>
<span class="t" style="left:1830.36px;top:338.00px;font-size:22px;line-height:25px;color:#2b6a8c;letter-spacing:0px;">18</span><div style="left:1829.86px;top:361.2px;width:25.46px;height:1.7px;background:#2b6a8c"></div>
<span class="t" style="left:1865.53px;top:338.00px;font-size:22px;line-height:25px;color:#2b6a8c;letter-spacing:0px;">19</span><div style="left:1865.03px;top:361.2px;width:25.46px;height:1.7px;background:#2b6a8c"></div>
<span class="t" style="left:1900.70px;top:338.00px;font-size:22px;line-height:25px;color:#2b6a8c;letter-spacing:0px;">20</span><div style="left:1900.20px;top:361.2px;width:25.46px;height:1.7px;background:#2b6a8c"></div>
<span class="t" style="left:1935.87px;top:338.00px;font-size:22px;line-height:25px;color:#2b6a8c;letter-spacing:0px;">21</span><div style="left:1935.37px;top:361.2px;width:25.46px;height:1.7px;background:#2b6a8c"></div>
<span class="t" style="left:1971.04px;top:338.00px;font-size:22px;line-height:25px;color:#2b6a8c;letter-spacing:0px;">22</span><div style="left:1970.54px;top:361.2px;width:25.46px;height:1.7px;background:#2b6a8c"></div>
<span class="t" style="left:2006.21px;top:338.00px;font-size:22px;line-height:25px;color:#2b6a8c;letter-spacing:0px;">23</span><div style="left:2005.71px;top:361.2px;width:25.46px;height:1.7px;background:#2b6a8c"></div>
<span class="t" style="left:2041.38px;top:338.00px;font-size:22px;line-height:25px;color:#2b6a8c;letter-spacing:0px;">24</span><div style="left:2040.88px;top:361.2px;width:25.46px;height:1.7px;background:#2b6a8c"></div>
<span class="t" style="left:2076.55px;top:338.00px;font-size:22px;line-height:25px;color:#2b6a8c;letter-spacing:0px;">25</span><div style="left:2076.05px;top:361.2px;width:25.46px;height:1.7px;background:#2b6a8c"></div>
<span class="t" style="left:2111.72px;top:338.00px;font-size:22px;line-height:25px;color:#2b6a8c;letter-spacing:0px;">26</span><div style="left:2111.22px;top:361.2px;width:25.46px;height:1.7px;background:#2b6a8c"></div>
<span class="t" style="left:2146.89px;top:338.00px;font-size:22px;line-height:25px;color:#2b6a8c;letter-spacing:0px;">27</span><div style="left:2146.39px;top:361.2px;width:25.46px;height:1.7px;background:#2b6a8c"></div>
<span class="t" style="left:2181.62px;top:338.00px;font-size:22px;line-height:25px;color:#000;letter-spacing:1.4px;">&gt;</span>
<div style="left:606px;top:373px;width:470px;height:333px;background:#fff;border-radius:11px;"></div>
<div style="left:613px;top:379px;width:459px;height:320px;background:#4d4d4d;"></div>
<span class="t" style="left:642.00px;top:411.00px;font-size:23.2px;line-height:26px;color:#fff;letter-spacing:0.679px;-webkit-text-stroke:0.95px #fff;">Digital British Baking</span>
<span class="t" style="left:641.48px;top:443.00px;font-size:23.2px;line-height:26px;color:#fff;letter-spacing:0.437px;-webkit-text-stroke:0.95px #fff;">Targeted Display</span>
<span class="t" style="left:641.79px;top:476.00px;font-size:23.2px;line-height:26px;color:#fff;letter-spacing:-0.234px;-webkit-text-stroke:0.95px #fff;">01-30-2025 - 01-31-2025</span>
<span class="t" style="left:641.65px;top:509.00px;font-size:23.2px;line-height:26px;color:#fff;letter-spacing:0.568px;-webkit-text-stroke:0.95px #fff;">Assigned Non-Final Artwork</span>
<div style="left:606px;top:373px;width:462px;height:325px;border:4px solid #f2b54b;border-radius:11px;box-shadow:0 0 0 1px rgba(236,241,250,.9);"></div>
<span class="t" style="left:612.99px;top:705.00px;font-size:21.5px;line-height:24px;color:#111;letter-spacing:0.319px;">asset.html</span>
<svg width="41" height="9" viewBox="0 0 41 9" style="left:1031.4px;top:716.9px"><circle cx="4.40" cy="4.4" r="4.3" fill="#2b6a8b"/><circle cx="20.05" cy="4.4" r="4.3" fill="#2b6a8b"/><circle cx="35.70" cy="4.4" r="4.3" fill="#2b6a8b"/></svg>
<div style="left:1098px;top:379px;width:458.4px;height:320px;background:#787878;"></div>
<svg width="458.4" height="258" viewBox="0 0 458.4 258" style="left:1098px;top:410px;overflow:hidden"><rect width="458.4" height="258" fill="#fbf5f3"/><g filter="url(#fbD)"><use href="#bow" x="-59.8" y="-118.6"/><use href="#bow" x="-131.3" y="-68.8"/><use href="#chy" x="-124.1" y="-119.6"/><use href="#bow" x="84.4" y="-118.6"/><use href="#bow" x="12.9" y="-68.8"/><use href="#chy" x="20.1" y="-119.6"/><use href="#bow" x="228.6" y="-118.6"/><use href="#bow" x="157.1" y="-68.8"/><use href="#chy" x="164.3" y="-119.6"/><use href="#bow" x="372.8" y="-118.6"/><use href="#bow" x="301.3" y="-68.8"/><use href="#chy" x="308.5" y="-119.6"/><use href="#bow" x="517.0" y="-118.6"/><use href="#bow" x="445.5" y="-68.8"/><use href="#chy" x="452.7" y="-119.6"/><use href="#bow" x="661.2" y="-118.6"/><use href="#bow" x="589.7" y="-68.8"/><use href="#chy" x="596.9" y="-119.6"/><use href="#bow" x="-59.8" y="39.8"/><use href="#bow" x="-131.3" y="89.6"/><use href="#chy" x="-124.1" y="38.8"/><use href="#chy" x="-51.5" y="141.5"/><use href="#bow" x="84.4" y="39.8"/><use href="#bow" x="12.9" y="89.6"/><use href="#chy" x="20.1" y="38.8"/><use href="#chy" x="92.7" y="141.5"/><use href="#bow" x="228.6" y="39.8"/><use href="#bow" x="157.1" y="89.6"/><use href="#chy" x="164.3" y="38.8"/><use href="#chy" x="236.9" y="141.5"/><use href="#bow" x="372.8" y="39.8"/><use href="#bow" x="301.3" y="89.6"/><use href="#chy" x="308.5" y="38.8"/><use href="#chy" x="381.1" y="141.5"/><use href="#bow" x="517.0" y="39.8"/><use href="#bow" x="445.5" y="89.6"/><use href="#chy" x="452.7" y="38.8"/><use href="#chy" x="525.3" y="141.5"/><use href="#bow" x="661.2" y="39.8"/><use href="#bow" x="589.7" y="89.6"/><use href="#chy" x="596.9" y="38.8"/><use href="#chy" x="669.5" y="141.5"/><use href="#bow" x="-59.8" y="198.2"/><use href="#bow" x="-131.3" y="248.0"/><use href="#chy" x="-124.1" y="197.2"/><use href="#chy" x="-51.5" y="299.9"/><use href="#bow" x="84.4" y="198.2"/><use href="#bow" x="12.9" y="248.0"/><use href="#chy" x="20.1" y="197.2"/><use href="#chy" x="92.7" y="299.9"/><use href="#bow" x="228.6" y="198.2"/><use href="#bow" x="157.1" y="248.0"/><use href="#chy" x="164.3" y="197.2"/><use href="#chy" x="236.9" y="299.9"/><use href="#bow" x="372.8" y="198.2"/><use href="#bow" x="301.3" y="248.0"/><use href="#chy" x="308.5" y="197.2"/><use href="#chy" x="381.1" y="299.9"/><use href="#bow" x="517.0" y="198.2"/><use href="#bow" x="445.5" y="248.0"/><use href="#chy" x="452.7" y="197.2"/><use href="#chy" x="525.3" y="299.9"/><use href="#bow" x="661.2" y="198.2"/><use href="#bow" x="589.7" y="248.0"/><use href="#chy" x="596.9" y="197.2"/><use href="#chy" x="669.5" y="299.9"/><use href="#bow" x="-59.8" y="356.6"/><use href="#bow" x="-131.3" y="406.4"/><use href="#chy" x="-124.1" y="355.6"/><use href="#chy" x="-51.5" y="458.3"/><use href="#bow" x="84.4" y="356.6"/><use href="#bow" x="12.9" y="406.4"/><use href="#chy" x="20.1" y="355.6"/><use href="#chy" x="92.7" y="458.3"/><use href="#bow" x="228.6" y="356.6"/><use href="#bow" x="157.1" y="406.4"/><use href="#chy" x="164.3" y="355.6"/><use href="#chy" x="236.9" y="458.3"/><use href="#bow" x="372.8" y="356.6"/><use href="#bow" x="301.3" y="406.4"/><use href="#chy" x="308.5" y="355.6"/><use href="#chy" x="381.1" y="458.3"/><use href="#bow" x="517.0" y="356.6"/><use href="#bow" x="445.5" y="406.4"/><use href="#chy" x="452.7" y="355.6"/><use href="#chy" x="525.3" y="458.3"/><use href="#bow" x="661.2" y="356.6"/><use href="#bow" x="589.7" y="406.4"/><use href="#chy" x="596.9" y="355.6"/><use href="#chy" x="669.5" y="458.3"/><use href="#chy" x="-51.5" y="-5.2"/><use href="#chy" x="92.7" y="-5.2"/><use href="#chy" x="236.9" y="-5.2"/><use href="#chy" x="381.1" y="-5.2"/><use href="#chy" x="525.3" y="-5.2"/><use href="#chy" x="669.5" y="-5.2"/></g></svg>
<span class="t" style="left:1097.99px;top:705.00px;font-size:21.5px;line-height:24px;color:#111;letter-spacing:-0.08px;">c8c98196f1e9231473156e58a9...</span>
<svg width="41" height="9" viewBox="0 0 41 9" style="left:1516.4px;top:716.9px"><circle cx="4.40" cy="4.4" r="4.3" fill="#2b6a8b"/><circle cx="20.05" cy="4.4" r="4.3" fill="#2b6a8b"/><circle cx="35.70" cy="4.4" r="4.3" fill="#2b6a8b"/></svg>
<div style="left:1583px;top:379px;width:458px;height:320px;background:#787878;"></div>
<svg width="458" height="230" style="left:1583px;top:424px;overflow:hidden"><use href="#wf" x="0" y="0" width="458" height="230"/></svg>
<span class="t" style="left:1582.26px;top:705.00px;font-size:21.5px;line-height:24px;color:#111;letter-spacing:0.145px;">120x60.jpeg</span>
<svg width="41" height="9" viewBox="0 0 41 9" style="left:2001.4px;top:716.9px"><circle cx="4.40" cy="4.4" r="4.3" fill="#2b6a8b"/><circle cx="20.05" cy="4.4" r="4.3" fill="#2b6a8b"/><circle cx="35.70" cy="4.4" r="4.3" fill="#2b6a8b"/></svg>
<div style="left:613px;top:768.7px;width:459px;height:320px;background:#787878;"></div>
<svg width="159.6" height="320" style="left:762.2px;top:768.7px;overflow:hidden"><use href="#wf" x="0" y="0" width="159.6" height="320"/></svg>
<span class="t" style="left:613.08px;top:1095.00px;font-size:21.5px;line-height:24px;color:#111;letter-spacing:0.071px;">300x600.jpeg</span>
<svg width="41" height="9" viewBox="0 0 41 9" style="left:1031.4px;top:1106.6px"><circle cx="4.40" cy="4.4" r="4.3" fill="#2b6a8b"/><circle cx="20.05" cy="4.4" r="4.3" fill="#2b6a8b"/><circle cx="35.70" cy="4.4" r="4.3" fill="#2b6a8b"/></svg>
<div style="left:1098px;top:768.7px;width:458.4px;height:320px;background:#4d4d4d;"></div>
<span class="t" style="left:1127.00px;top:801.00px;font-size:23.2px;line-height:26px;color:#fff;letter-spacing:0.679px;-webkit-text-stroke:0.95px #fff;">Digital British Baking</span>
<span class="t" style="left:1126.48px;top:833.00px;font-size:23.2px;line-height:26px;color:#fff;letter-spacing:0.437px;-webkit-text-stroke:0.95px #fff;">Targeted Display</span>
<span class="t" style="left:1126.79px;top:865.00px;font-size:23.2px;line-height:26px;color:#fff;letter-spacing:-0.234px;-webkit-text-stroke:0.95px #fff;">02-06-2025 - 02-13-2025</span>
<span class="t" style="left:1126.65px;top:899.00px;font-size:23.2px;line-height:26px;color:#fff;letter-spacing:0.568px;-webkit-text-stroke:0.95px #fff;">Assigned Non-Final Artwork</span>
<span class="t" style="left:1097.99px;top:1095.00px;font-size:21.5px;line-height:24px;color:#111;letter-spacing:0.319px;">asset.html</span>
<svg width="41" height="9" viewBox="0 0 41 9" style="left:1516.4px;top:1106.6px"><circle cx="4.40" cy="4.4" r="4.3" fill="#2b6a8b"/><circle cx="20.05" cy="4.4" r="4.3" fill="#2b6a8b"/><circle cx="35.70" cy="4.4" r="4.3" fill="#2b6a8b"/></svg>
<div style="left:1583px;top:768.7px;width:458px;height:320px;background:#4d4d4d;"></div>
<span class="t" style="left:1612.00px;top:801.00px;font-size:23.2px;line-height:26px;color:#fff;letter-spacing:0.679px;-webkit-text-stroke:0.95px #fff;">Digital British Baking</span>
<span class="t" style="left:1611.48px;top:833.00px;font-size:23.2px;line-height:26px;color:#fff;letter-spacing:0.437px;-webkit-text-stroke:0.95px #fff;">Targeted Display</span>
<span class="t" style="left:1611.79px;top:865.00px;font-size:23.2px;line-height:26px;color:#fff;letter-spacing:-0.234px;-webkit-text-stroke:0.95px #fff;">02-06-2025 - 02-13-2025</span>
<span class="t" style="left:1611.65px;top:899.00px;font-size:23.2px;line-height:26px;color:#fff;letter-spacing:0.568px;-webkit-text-stroke:0.95px #fff;">Assigned Non-Final Artwork</span>
<span class="t" style="left:1582.99px;top:1095.00px;font-size:21.5px;line-height:24px;color:#111;letter-spacing:0.319px;">asset.html</span>
<svg width="41" height="9" viewBox="0 0 41 9" style="left:2001.4px;top:1106.6px"><circle cx="4.40" cy="4.4" r="4.3" fill="#2b6a8b"/><circle cx="20.05" cy="4.4" r="4.3" fill="#2b6a8b"/><circle cx="35.70" cy="4.4" r="4.3" fill="#2b6a8b"/></svg>
<div style="left:613px;top:1158px;width:459px;height:320px;background:#787878;"></div>
<svg width="384.7" height="320" style="left:650px;top:1158px;overflow:hidden"><use href="#wf" x="0" y="0" width="384.7" height="320"/></svg>
<span class="t" style="left:613.08px;top:1484.00px;font-size:21.5px;line-height:24px;color:#111;letter-spacing:0.08px;">300x250.jpeg</span>
<svg width="41" height="9" viewBox="0 0 41 9" style="left:1031.4px;top:1495.9px"><circle cx="4.40" cy="4.4" r="4.3" fill="#2b6a8b"/><circle cx="20.05" cy="4.4" r="4.3" fill="#2b6a8b"/><circle cx="35.70" cy="4.4" r="4.3" fill="#2b6a8b"/></svg>
<div style="left:1098px;top:1158px;width:458.4px;height:320px;background:#787878;"></div>
<svg width="266" height="320" style="left:1194px;top:1158px;overflow:hidden"><use href="#wf" x="0" y="0" width="266" height="320"/></svg>
<span class="t" style="left:1098.93px;top:1484.00px;font-size:21.5px;line-height:24px;color:#111;letter-spacing:-0.032px;">waterfall120_really_really_reall...</span>
<svg width="41" height="9" viewBox="0 0 41 9" style="left:1516.4px;top:1495.9px"><circle cx="4.40" cy="4.4" r="4.3" fill="#2b6a8b"/><circle cx="20.05" cy="4.4" r="4.3" fill="#2b6a8b"/><circle cx="35.70" cy="4.4" r="4.3" fill="#2b6a8b"/></svg>
<div style="left:1583px;top:1158px;width:458px;height:320px;background:#787878;"></div>
<svg width="425.8" height="320" style="left:1599px;top:1158px;overflow:hidden"><use href="#wfsharp" x="0" y="0" width="425.8" height="320"/></svg>
<span class="t" style="left:1581.92px;top:1484.00px;font-size:21.5px;line-height:24px;color:#111;letter-spacing:-0.927px;">IMG_1870.JPG</span>
<svg width="41" height="9" viewBox="0 0 41 9" style="left:2001.4px;top:1495.9px"><circle cx="4.40" cy="4.4" r="4.3" fill="#2b6a8b"/><circle cx="20.05" cy="4.4" r="4.3" fill="#2b6a8b"/><circle cx="35.70" cy="4.4" r="4.3" fill="#2b6a8b"/></svg>
<div style="left:613px;top:1547.7px;width:459px;height:320px;background:#787878;"></div>
<svg width="427" height="320" style="left:629px;top:1547.7px;overflow:hidden"><use href="#sky" x="0" y="0" width="427" height="320"/></svg>
</div></body></html>
